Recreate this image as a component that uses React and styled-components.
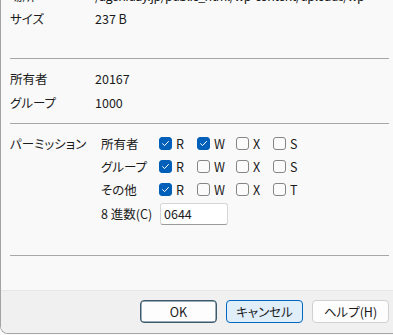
import React from "react";
import styled, { createGlobalStyle } from "styled-components";

const Global = createGlobalStyle`
  html, body { margin: 0; padding: 0; background: #fbfbfb; }
  body { font-family: "Noto Sans CJK JP", "Noto Sans", sans-serif; font-feature-settings: "palt"; color: #1b1b1b; }
  * { box-sizing: border-box; }
`;

const Window = styled.div`
  width: 393px;
  height: 334px;
  border-left: 1px solid #a3a3a3;
  border-bottom: 1px solid #a3a3a3;
  border-bottom-left-radius: 8px;
  overflow: hidden;
  display: flex;
  flex-direction: column;
  font-size: 12.5px;
`;

const Content = styled.div`
  flex: 1;
  background: #f9f9f9;
  padding-left: 9px;
  padding-right: 4px;
  display: flex;
  flex-direction: column;
`;

const InfoSection = styled.div`
  display: flex;
  flex-direction: column;
  margin-top: ${(p) => p.$top}px;
`;

const InfoRow = styled.div`
  display: flex;
  align-items: center;
  height: ${(p) => p.$h}px;
  white-space: nowrap;
`;

const Label = styled.div`
  width: 85px;
  flex: none;
`;

const Value = styled.div`
  letter-spacing: ${(p) => (p.$tight ? "-0.55px" : "normal")};
`;

const Separator = styled.div`
  height: 1px;
  background: #a7a7a7;
  margin-top: ${(p) => p.$top}px;
`;

const PermSection = styled.div`
  display: flex;
  margin-top: 8px;
`;

const PermTitle = styled.div`
  width: 91px;
  flex: none;
  height: 23px;
  display: flex;
  align-items: center;
`;

const PermGrid = styled.div`
  display: flex;
  flex-direction: column;
`;

const PermRow = styled.div`
  display: flex;
  align-items: center;
  height: 23px;
  margin-top: ${(p) => p.$top || 0}px;
`;

const RowLabel = styled.div`
  width: 58px;
  flex: none;
  white-space: nowrap;
`;

const CheckItem = styled.label`
  width: ${(p) => p.$w}px;
  flex: none;
  display: flex;
  align-items: center;
  gap: 4px;
`;

const Box = styled.span`
  width: 13px;
  height: 13px;
  border-radius: 3px;
  flex: none;
  display: flex;
  align-items: center;
  justify-content: center;
  background: ${(p) => (p.$on ? "#005fb8" : "#fbfbfb")};
  border: 1px solid ${(p) => (p.$on ? "#005fb8" : "#858585")};
`;

const Octal = styled.div`
  width: 68px;
  height: 22px;
  margin-left: 1px;
  background: #ffffff;
  border: 1px solid #d6d6d6;
  border-bottom-color: #9a9a9a;
  border-radius: 3px;
  padding-left: 3px;
  display: flex;
  align-items: center;
`;

const Footer = styled.div`
  height: 43px;
  flex: none;
  background: #f0f0f0;
  border-top: 1px solid #e6e6e6;
  display: flex;
  justify-content: flex-end;
  align-items: flex-start;
  gap: 9px;
  padding-top: 9px;
  padding-right: 4px;
`;

const Button = styled.button`
  width: 77px;
  height: 23px;
  border-radius: 4px;
  font: inherit;
  font-size: 12.5px;
  color: #1b1b1b;
  display: flex;
  align-items: center;
  justify-content: center;
  padding: 0;
  background: ${(p) => (p.$variant === "hover" ? "#e0eef9" : "#fdfdfd")};
  border: 1px solid
    ${(p) =>
      p.$variant === "default" ? "#3b5a6e" : p.$variant === "hover" ? "#0067c0" : "#d0d0d0"};
  box-shadow: ${(p) => (p.$variant === "default" ? "inset 0 0 0 0.5px #3b5a6e" : "none")};
`;

const Check = () => (
  <svg width="9" height="9" viewBox="0 0 9 9">
    <path d="M1.6 4.7 L3.6 6.6 L7.5 2.4" fill="none" stroke="#fff" strokeWidth="1" strokeLinecap="round" strokeLinejoin="round" />
  </svg>
);

const widths = [38, 39, 37, 30];

function CB({ on, label, w }) {
  return (
    <CheckItem $w={w}>
      <Box $on={on}>{on && <Check />}</Box>
      <span>{label}</span>
    </CheckItem>
  );
}

const perms = [
  { name: "所有者", items: [["R", true], ["W", true], ["X", false], ["S", false]] },
  { name: "グループ", items: [["R", true], ["W", false], ["X", false], ["S", false]] },
  { name: "その他", items: [["R", true], ["W", false], ["X", false], ["T", false]] },
];

export default function App() {
  return (
    <>
      <Global />
      <Window>
        <Content>
          <InfoSection $top={-16}>
            <InfoRow $h={22}>
              <Label>場所</Label>
              <Value $tight>/ageniday.jp/public_html/wp-content/uploads/wp</Value>
            </InfoRow>
            <InfoRow $h={24}>
              <Label>サイズ</Label>
              <Value>237 B</Value>
            </InfoRow>
          </InfoSection>
          <Separator $top={28} />
          <InfoSection $top={7}>
            <InfoRow $h={24}>
              <Label>所有者</Label>
              <Value>20167</Value>
            </InfoRow>
            <InfoRow $h={24}>
              <Label>グループ</Label>
              <Value>1000</Value>
            </InfoRow>
          </InfoSection>
          <Separator $top={9} />
          <PermSection>
            <PermTitle>パーミッション</PermTitle>
            <PermGrid>
              {perms.map((r) => (
                <PermRow key={r.name}>
                  <RowLabel>{r.name}</RowLabel>
                  {r.items.map(([l, on], i) => (
                    <CB key={l} label={l} on={on} w={widths[i]} />
                  ))}
                </PermRow>
              ))}
              <PermRow $top={1}>
                <RowLabel>8 進数(C)</RowLabel>
                <Octal>0644</Octal>
              </PermRow>
            </PermGrid>
          </PermSection>
          <Separator $top={30} />
        </Content>
        <Footer>
          <Button $variant="default">OK</Button>
          <Button $variant="hover">キャンセル</Button>
          <Button>ヘルプ(H)</Button>
        </Footer>
      </Window>
    </>
  );
}
